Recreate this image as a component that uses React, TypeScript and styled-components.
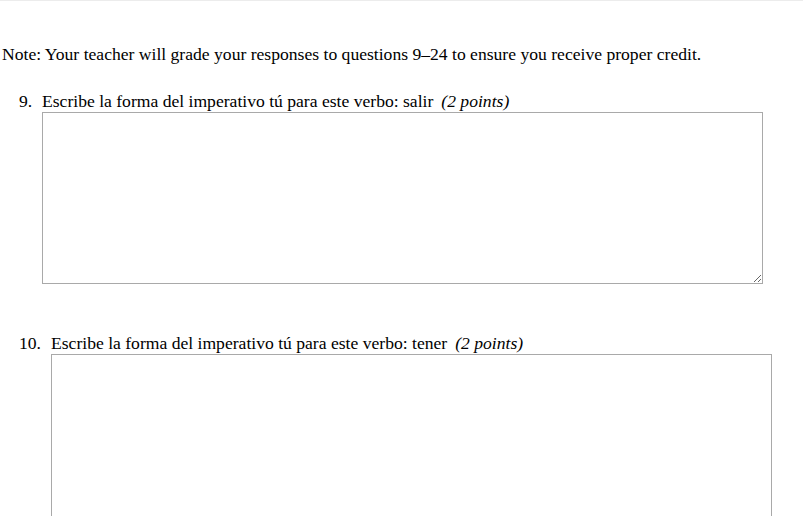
import React from "react";
import styled, { createGlobalStyle } from "styled-components";

const Global = createGlobalStyle`
  html, body { margin: 0; padding: 0; background: #fff; }
  body { font-family: "Liberation Serif", "Times New Roman", serif; color: #000; }
`;

const Page = styled.div`
  height: 516px;
  overflow: hidden;
  border-top: 1px solid #ececec;
  box-sizing: border-box;
`;

const Note = styled.p`
  margin: 43px 0 0 2px;
  font-size: 17.6px;
  line-height: 20px;
`;

const Questions = styled.div`
  display: flex;
  flex-direction: column;
  gap: 49px;
  margin-top: 27px;
  padding-left: 19px;
`;

const Question = styled.div`
  display: flex;
  align-items: flex-start;
`;

const Num = styled.span<{ $w: number }>`
  font-size: 17.6px;
  line-height: 20px;
  width: ${(p) => p.$w}px;
  flex: none;
`;

const Body = styled.div`
  display: flex;
  flex-direction: column;
`;

const Prompt = styled.div`
  font-size: 17.6px;
  line-height: 20px;
  margin-bottom: 1px;
  white-space: nowrap;
`;

const Points = styled.i`
  margin-left: 8px;
`;

const Answer = styled.textarea<{ $h: number }>`
  width: 721px;
  height: ${(p) => p.$h}px;
  box-sizing: border-box;
  border: 1px solid #a9a9a9;
  margin: 0;
  padding: 2px;
  font-family: "Liberation Sans", Arial, sans-serif;
  font-size: 13px;
  display: block;
`;

const items = [
  { n: "9.", w: 23, verb: "salir", h: 172 },
  { n: "10.", w: 32, verb: "tener", h: 172 },
];

export default function App() {
  return (
    <>
      <Global />
      <Page>
        <Note>
          Note: Your teacher will grade your responses to questions 9–24 to ensure you receive proper credit.
        </Note>
        <Questions>
          {items.map((q) => (
            <Question key={q.n}>
              <Num $w={q.w}>{q.n}</Num>
              <Body>
                <Prompt>
                  Escribe la forma del imperativo tú para este verbo: {q.verb}
                  <Points>(2 points)</Points>
                </Prompt>
                <Answer $h={q.h} />
              </Body>
            </Question>
          ))}
        </Questions>
      </Page>
    </>
  );
}
